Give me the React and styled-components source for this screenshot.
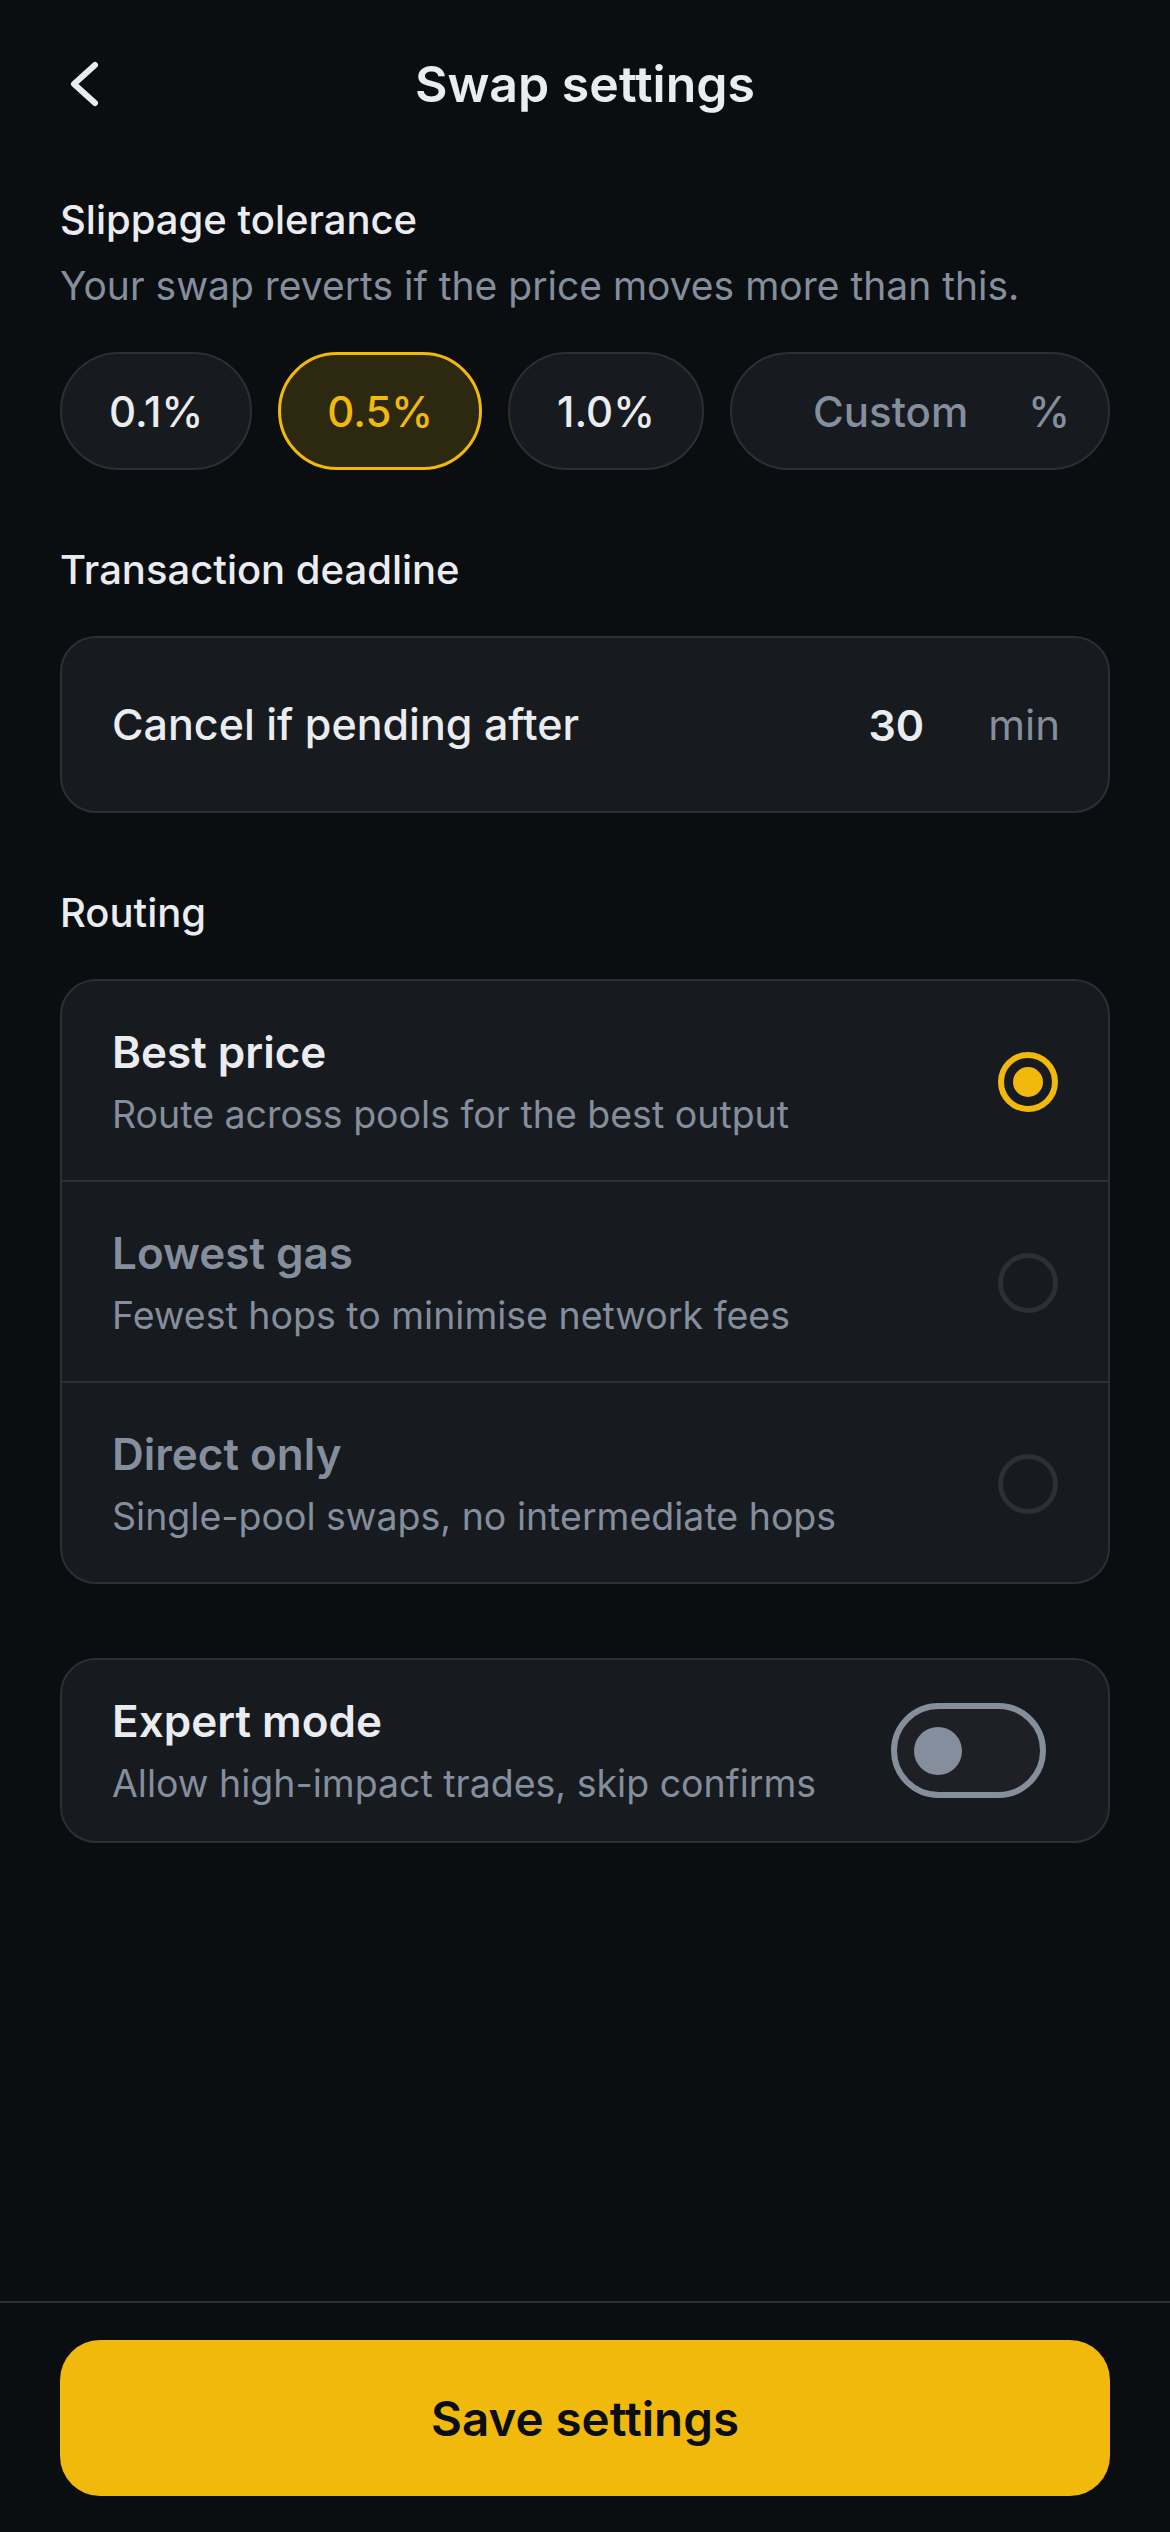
import React, { useState } from 'react';
import styled, { createGlobalStyle, css } from 'styled-components';

const GlobalStyle = createGlobalStyle`
  * {
    box-sizing: border-box;
  }

  body {
    margin: 0;
    background: #0b0e11;
    font-family: Inter, "Noto Sans", "Liberation Sans", sans-serif;
    color: #eaecef;
  }
`;

const Page = styled.div`
  display: flex;
  flex-direction: column;
  min-height: 100vh;
  background: #0b0e11;
`;

const Header = styled.header`
  display: grid;
  grid-template-columns: 60px 1fr 60px;
  align-items: center;
  height: 168px;
  padding: 0 60px;
`;

const BackButton = styled.button`
  display: flex;
  width: 60px;
  height: 60px;
  padding: 0;
  border: none;
  background: transparent;
  color: #eaecef;
  cursor: pointer;
`;

const Title = styled.h1`
  margin: 0;
  text-align: center;
  font-size: 50px;
  line-height: 62px;
  font-weight: 600;
  color: #eaecef;
`;

const Main = styled.main`
  flex: 1;
  display: flex;
  flex-direction: column;
  gap: 74px;
  padding: 26px 60px 60px;
`;

const Section = styled.section`
  display: flex;
  flex-direction: column;
`;

const SectionHead = styled.div`
  display: flex;
  flex-direction: column;
  gap: 14px;
  margin-bottom: 40px;
`;

const SectionLabel = styled.h2`
  margin: 0;
  font-size: 40px;
  line-height: 52px;
  font-weight: 500;
  color: #eaecef;
`;

const SectionHint = styled.p`
  margin: 0;
  font-size: 39px;
  line-height: 52px;
  font-weight: 400;
  color: #848e9c;
`;

const ChipRow = styled.div`
  display: flex;
  gap: 26px;
`;

const Chip = styled.button`
  display: flex;
  align-items: center;
  justify-content: center;
  flex: none;
  height: 118px;
  padding: 0 47px;
  border-radius: 59px;
  border: 2px solid #2b2f36;
  background: #171a1f;
  font-family: inherit;
  font-size: 42px;
  font-weight: 500;
  color: #eaecef;
  cursor: pointer;

  ${props => props.$active && css`
    padding: 0 46px;
    border: 3px solid #f0b90b;
    background: #2d2810;
    color: #f0b90b;
  `}
`;

const CustomChip = styled.label`
  flex: 1;
  min-width: 0;
  display: flex;
  align-items: center;
  gap: 60px;
  height: 118px;
  padding: 0 38px 0 40px;
  border-radius: 59px;
  border: 2px solid #2b2f36;
  background: #171a1f;
`;

const TextInput = styled.input`
  flex: 1;
  width: 0;
  min-width: 0;
  padding: 0;
  border: none;
  outline: none;
  background: transparent;
  text-align: right;
  font-family: inherit;
  font-size: ${props => (props.$strong ? '43px' : '42px')};
  font-weight: ${props => (props.$strong ? 600 : 500)};
  color: #eaecef;

  &::placeholder {
    color: #848e9c;
  }
`;

const Suffix = styled.span`
  flex: none;
  font-size: ${props => (props.$light ? '42px' : '42px')};
  font-weight: ${props => (props.$light ? 400 : 500)};
  color: #848e9c;
`;

const Card = styled.div`
  border: 2px solid #2b2f36;
  border-radius: 36px;
  background: #171a1f;
  overflow: hidden;
`;

const DeadlineRow = styled.label`
  display: flex;
  align-items: center;
  gap: 64px;
  padding: 59px 48px 59px 50px;
`;

const DeadlineText = styled.span`
  font-size: 43px;
  line-height: 55px;
  font-weight: 500;
  color: #eaecef;
  white-space: nowrap;
`;

const OptionRow = styled.div`
  display: flex;
  align-items: center;
  justify-content: space-between;
  padding: ${props => (props.$compact ? '32px 62px 32px 50px' : '42px 50px 40px')};
  cursor: pointer;

  & + & {
    border-top: 2px solid #2b2f36;
  }
`;

const OptionText = styled.div`
  display: flex;
  flex-direction: column;
  gap: 9px;
`;

const OptionTitle = styled.span`
  font-size: 44px;
  line-height: 58px;
  font-weight: 600;
  color: ${props => (props.$muted ? '#848e9c' : '#eaecef')};
`;

const OptionSub = styled.span`
  font-size: 37.5px;
  line-height: 50px;
  font-weight: 400;
  color: #848e9c;
`;

const Radio = styled.span`
  display: flex;
  align-items: center;
  justify-content: center;
  flex: none;
  width: 60px;
  height: 60px;
  border-radius: 50%;
  border: ${props => (props.$checked ? '6px solid #f0b90b' : '5px solid #2b2f36')};

  &::after {
    content: '';
    display: ${props => (props.$checked ? 'block' : 'none')};
    width: 30px;
    height: 30px;
    border-radius: 50%;
    background: #f0b90b;
  }
`;

const Toggle = styled.button`
  display: flex;
  align-items: center;
  justify-content: ${props => (props.$on ? 'flex-end' : 'flex-start')};
  flex: none;
  width: 155px;
  height: 95px;
  padding: 0 17px;
  border-radius: 48px;
  border: 6px solid ${props => (props.$on ? '#f0b90b' : '#848e9c')};
  background: #1e2026;
  cursor: pointer;
`;

const Knob = styled.span`
  width: 48px;
  height: 48px;
  border-radius: 50%;
  background: ${props => (props.$on ? '#f0b90b' : '#848e9c')};
`;

const Footer = styled.footer`
  padding: 37px 60px 36px;
  border-top: 2px solid #2b2f36;
`;

const SaveButton = styled.button`
  width: 100%;
  height: 156px;
  border: none;
  border-radius: 40px;
  background: #f0b90b;
  font-family: inherit;
  font-size: 47.5px;
  font-weight: 600;
  color: #0b0e11;
  cursor: pointer;
`;

const presets = ['0.1%', '0.5%', '1.0%'];

const routes = [
  { id: 'best', title: 'Best price', sub: 'Route across pools for the best output' },
  { id: 'gas', title: 'Lowest gas', sub: 'Fewest hops to minimise network fees' },
  { id: 'direct', title: 'Direct only', sub: 'Single-pool swaps, no intermediate hops' }
];

const App = () => {
  const [slippage, setSlippage] = useState('0.5%');
  const [route, setRoute] = useState('best');
  const [expert, setExpert] = useState(false);

  return (
    <Page>
      <GlobalStyle />
      <Header>
        <BackButton aria-label="Back">
          <svg width="60" height="60" viewBox="0 0 60 60" fill="none">
            <path d="M35 11 L14 30 L35 49" stroke="currentColor" strokeWidth="6" strokeLinecap="round" strokeLinejoin="round" />
          </svg>
        </BackButton>
        <Title>Swap settings</Title>
        <span />
      </Header>

      <Main>
        <Section>
          <SectionHead>
            <SectionLabel>Slippage tolerance</SectionLabel>
            <SectionHint>Your swap reverts if the price moves more than this.</SectionHint>
          </SectionHead>
          <ChipRow>
            {presets.map(p => (
              <Chip key={p} $active={slippage === p} onClick={() => setSlippage(p)}>
                {p}
              </Chip>
            ))}
            <CustomChip>
              <TextInput placeholder="Custom" />
              <Suffix>%</Suffix>
            </CustomChip>
          </ChipRow>
        </Section>

        <Section>
          <SectionHead>
            <SectionLabel>Transaction deadline</SectionLabel>
          </SectionHead>
          <Card>
            <DeadlineRow>
              <DeadlineText>Cancel if pending after</DeadlineText>
              <TextInput $strong defaultValue="30" />
              <Suffix $light>min</Suffix>
            </DeadlineRow>
          </Card>
        </Section>

        <Section>
          <SectionHead>
            <SectionLabel>Routing</SectionLabel>
          </SectionHead>
          <Card>
            {routes.map(r => (
              <OptionRow key={r.id} onClick={() => setRoute(r.id)}>
                <OptionText>
                  <OptionTitle $muted={route !== r.id}>{r.title}</OptionTitle>
                  <OptionSub>{r.sub}</OptionSub>
                </OptionText>
                <Radio $checked={route === r.id} />
              </OptionRow>
            ))}
          </Card>
        </Section>

        <Card>
          <OptionRow $compact>
            <OptionText>
              <OptionTitle>Expert mode</OptionTitle>
              <OptionSub>Allow high-impact trades, skip confirms</OptionSub>
            </OptionText>
            <Toggle $on={expert} onClick={() => setExpert(!expert)} aria-label="Expert mode">
              <Knob $on={expert} />
            </Toggle>
          </OptionRow>
        </Card>
      </Main>

      <Footer>
        <SaveButton>Save settings</SaveButton>
      </Footer>
    </Page>
  );
};

export default App;
